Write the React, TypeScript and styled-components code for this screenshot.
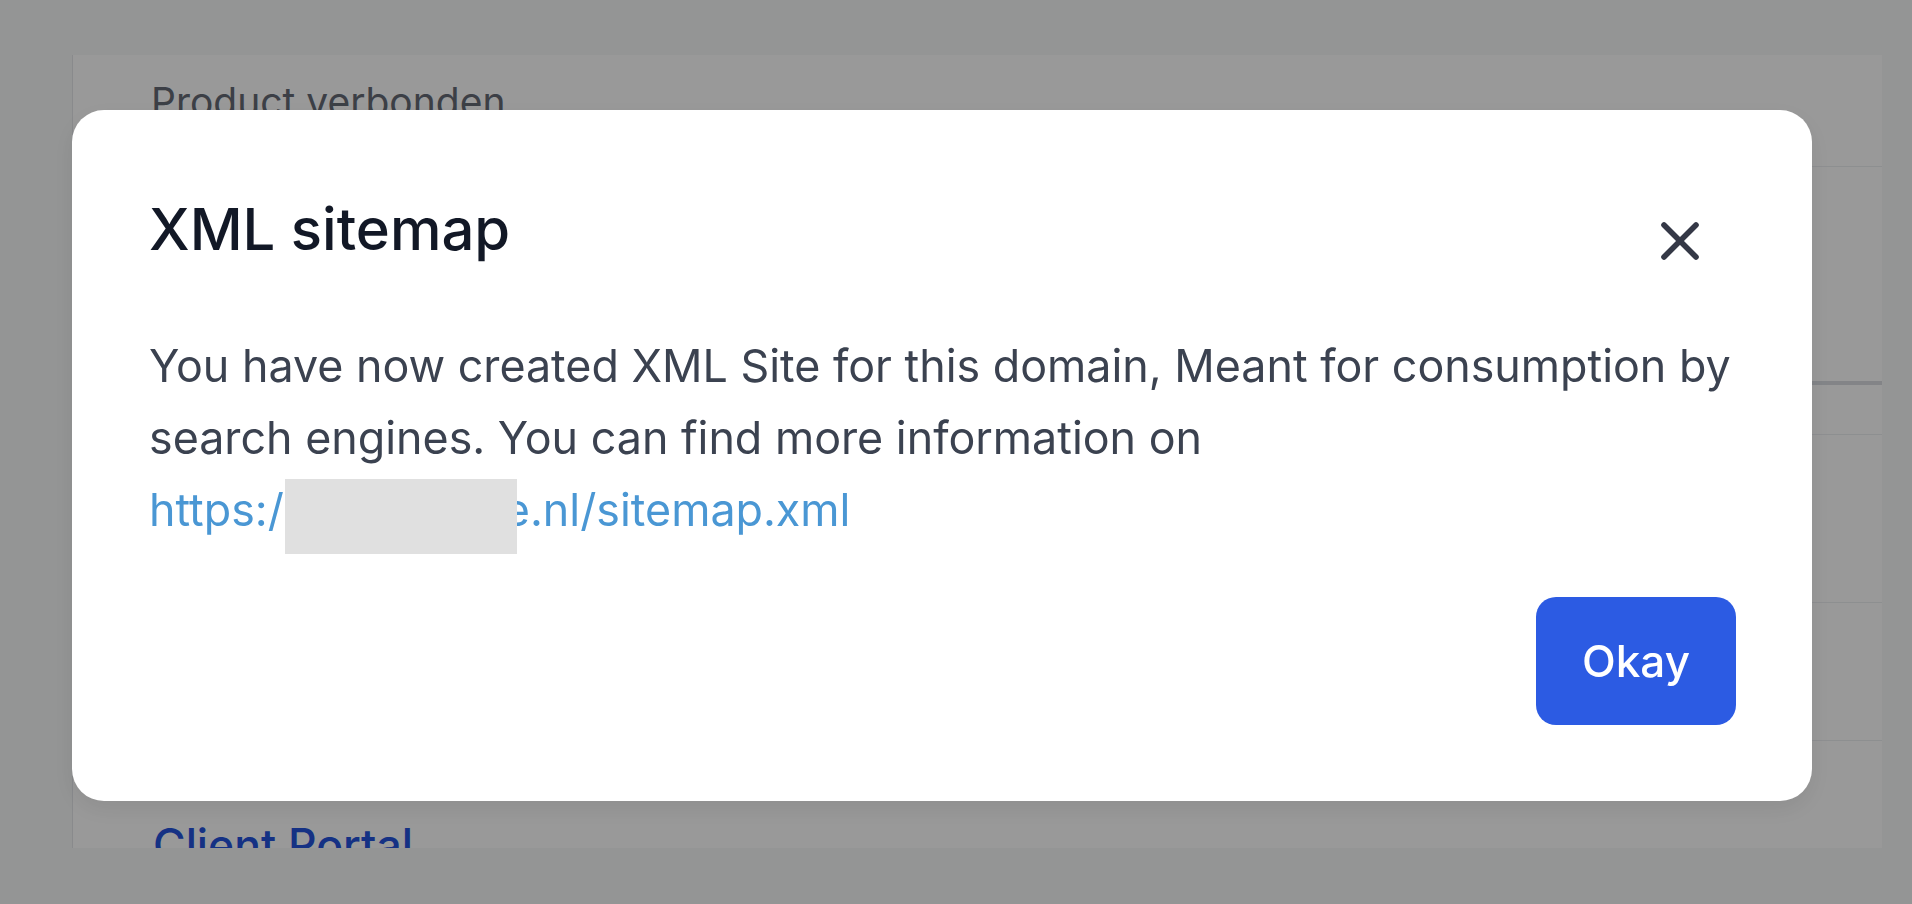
import React from "react";
import styled, { createGlobalStyle } from "styled-components";

const GlobalStyle = createGlobalStyle`
  html, body {
    margin: 0;
    padding: 0;
    background: #f7f8f9;
    font-family: Inter, "Noto Sans", "Liberation Sans", sans-serif;
    overflow: hidden;
  }
  * { box-sizing: border-box; }
`;

const Page = styled.div`
  width: 1912px;
  height: 904px;
  padding: 55px 30px 0 72px;
`;

const Panel = styled.section`
  height: 793px;
  background: #ffffff;
  border-left: 1px solid #e4e6ea;
  overflow: hidden;
  display: flex;
  flex-direction: column;
`;

const SectionLabel = styled.div`
  flex-shrink: 0;
  padding: 19px 0 0 78px;
  height: 112px;
  font-size: 39px;
  line-height: 56px;
  color: #646a75;
  border-bottom: 1px solid #eceef1;
`;

const Row = styled.div<{ $h: number; $thick?: boolean }>`
  flex-shrink: 0;
  height: ${(p) => p.$h}px;
  border-bottom: ${(p) => (p.$thick ? "4px solid #dadde2" : "1px solid #eceef1")};
`;

const PortalLink = styled.div`
  flex-shrink: 0;
  padding: 76px 0 0 80px;
  font-size: 44.5px;
  line-height: 56px;
  font-weight: 500;
  color: #2352dc;
`;

const Overlay = styled.div`
  position: fixed;
  inset: 0;
  background: rgba(0, 0, 0, 0.4);
`;

const Modal = styled.div`
  position: absolute;
  left: 72px;
  top: 110px;
  width: 1740px;
  background: #ffffff;
  border-radius: 32px;
  padding: 79px 76px 76px 77px;
  box-shadow: 0 8px 24px rgba(0, 0, 0, 0.08);
  display: flex;
  flex-direction: column;
`;

const Header = styled.div`
  display: flex;
  align-items: flex-start;
  justify-content: space-between;
`;

const Title = styled.h2`
  margin: 0;
  font-size: 58px;
  line-height: 80px;
  font-weight: 500;
  color: #121826;
`;

const CloseButton = styled.button`
  margin: 14px 18px 0 0;
  width: 76px;
  height: 76px;
  border: 0;
  padding: 0;
  background: transparent;
  display: flex;
  align-items: center;
  justify-content: center;
  color: #343846;
  cursor: pointer;
`;

const Body = styled.p`
  margin: 51px 0 0;
  font-size: 44.8px;
  line-height: 72px;
  color: #3b4250;
  white-space: nowrap;
`;

const Link = styled.a`
  color: #4a97d4;
  text-decoration: none;
`;

const Redacted = styled.span`
  position: relative;
  z-index: 1;
  display: inline-block;
  vertical-align: top;
  top: 5px;
  width: 232px;
  height: 75px;
  margin-left: 1px;
  margin-bottom: -10px;
  margin-right: -13px;
  background: #e0e0e0;
`;

const Footer = styled.div`
  margin-top: 51px;
  display: flex;
  justify-content: flex-end;
`;

const OkayButton = styled.button`
  width: 200px;
  height: 128px;
  border: 0;
  border-radius: 20px;
  background: #2c5be3;
  color: #ffffff;
  font-family: inherit;
  font-size: 44px;
  font-weight: 500;
  cursor: pointer;
`;

export default function App() {
  return (
    <>
      <GlobalStyle />
      <Page>
        <Panel>
          <SectionLabel>Product verbonden</SectionLabel>
          <Row $h={218} $thick />
          <Row $h={50} />
          <Row $h={168} />
          <Row $h={138} />
          <PortalLink>Client Portal</PortalLink>
        </Panel>
      </Page>
      <Overlay>
        <Modal role="dialog" aria-modal="true">
          <Header>
            <Title>XML sitemap</Title>
            <CloseButton aria-label="Close">
              <svg width="64" height="64" viewBox="0 0 24 24" fill="none">
                <path
                  d="M6 6L18 18M18 6L6 18"
                  stroke="currentColor"
                  strokeWidth="2.1"
                  strokeLinecap="round"
                />
              </svg>
            </CloseButton>
          </Header>
          <Body>
            You have now created XML Site for this domain, Meant for consumption by
            <br />
            search engines. You can find more information on
            <br />
            <Link href="#">
              https:/
              <Redacted />
              e.nl/sitemap.xml
            </Link>
          </Body>
          <Footer>
            <OkayButton>Okay</OkayButton>
          </Footer>
        </Modal>
      </Overlay>
    </>
  );
}
